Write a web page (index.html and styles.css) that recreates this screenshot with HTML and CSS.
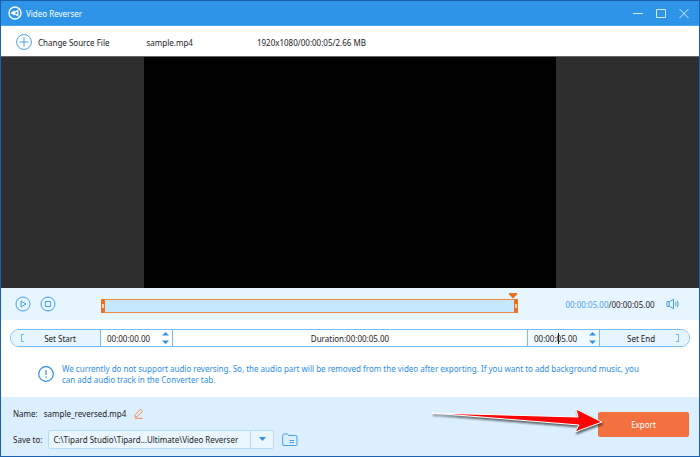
FILE: index.html
```
<!DOCTYPE html>
<html lang="en">
<head>
<meta charset="utf-8">
<title>Video Reverser</title>
<link rel="stylesheet" href="styles.css">
</head>
<body>
<main class="window">
  <header class="titlebar">
    <svg class="logo" viewBox="0 0 14 14" aria-hidden="true"><circle cx="7" cy="7" r="6" fill="none" stroke="#fff" stroke-width="1.400"/><path d="M2.500 7 6.500 4.200V9.800Z" fill="#fff"/><path d="M5.500 7 9.800 4.500V9.500Z" fill="none" stroke="#fff" stroke-width="1.300"/></svg>
    <h1 class="title">Video Reverser</h1>
    <div class="controls">
      <button class="icon-btn" aria-label="Minimize"><svg width="12" height="12" viewBox="0 0 12 12"><path d="M1 6.500H11"/></svg></button>
      <button class="icon-btn" aria-label="Maximize"><svg width="12" height="12" viewBox="0 0 12 12"><path d="M1.500 2.500H10.500V10.500H1.500Z"/></svg></button>
      <button class="icon-btn" aria-label="Close"><svg width="12" height="12" viewBox="0 0 12 12"><path d="M1.500 2 10.500 11M10.500 2 1.500 11"/></svg></button>
    </div>
  </header>

  <section class="source">
    <button class="change">
      <svg width="16" height="16" viewBox="0 0 16 16"><circle cx="8" cy="8" r="7.400"/><path d="M8 3.500V12.500M3.500 8H12.500"/></svg>
      <span>Change Source File</span>
    </button>
    <span class="file">sample.mp4</span>
    <span>1920x1080/00:00:05/2.66 MB</span>
  </section>

  <section class="stage"><div class="video"></div></section>

  <section class="playback">
    <button class="icon-btn" aria-label="Play"><svg width="16" height="16" viewBox="0 0 16 16"><circle cx="8" cy="8" r="7"/><path d="M6 5 11 8 6 11Z"/></svg></button>
    <button class="icon-btn" aria-label="Stop"><svg width="16" height="16" viewBox="0 0 16 16"><circle cx="8" cy="8" r="7"/><path d="M5.500 5.500H10.500V10.500H5.500Z"/></svg></button>
    <div class="timeline">
      <span class="handle"></span>
      <span class="handle handle-end"></span>
      <svg class="playhead" width="8" height="6" viewBox="0 0 8 6"><path d="M0 0H8V1.500L4 5.500 0 1.500Z"/></svg>
    </div>
    <span class="time"><span class="now">00:00:05.00</span>/00:00:05.00</span>
    <button class="icon-btn" aria-label="Volume"><svg width="14" height="12" viewBox="0 0 14 12"><path d="M1 3.500H3.200V8.500H1ZM3.500 4 7.500 1.200V10.800L3.500 8M9.500 4Q10.500 6 9.500 8M11.200 2.500Q13.200 6 11.200 9.500"/></svg></button>
  </section>

  <section class="range">
    <button class="set set-start"><span class="bracket bracket-open"></span>Set Start</button>
    <div class="stamp">
      <input type="text" value="00:00:00.00" aria-label="Start time">
      <svg class="spin" width="7" height="12" viewBox="0 0 7 12"><path d="M0 3.500 3.500 0 7 3.500ZM0 8.500 3.500 12 7 8.500Z"/></svg>
    </div>
    <div class="duration">Duration:00:00:05.00</div>
    <div class="stamp stamp-end">
      <input type="text" value="00:00:05.00" aria-label="End time">
      <i class="caret"></i>
      <svg class="spin" width="7" height="12" viewBox="0 0 7 12"><path d="M0 3.500 3.500 0 7 3.500ZM0 8.500 3.500 12 7 8.500Z"/></svg>
    </div>
    <button class="set set-end">Set End<span class="bracket bracket-close"></span></button>
  </section>

  <section class="notice">
    <svg width="16" height="16" viewBox="0 0 16 16"><circle cx="8" cy="8" r="7.300"/><path d="M8 4V9M8 10.500V12"/></svg>
    <p>We currently do not support audio reversing. So, the audio part will be removed from the video after exporting. If you want to add background music, you can add audio track in the Converter tab.</p>
  </section>

  <footer class="output">
    <div class="fields">
      <div class="row">
        <span>Name:</span>
        <span>sample_reversed.mp4</span>
        <button class="icon-btn edit" aria-label="Edit name"><svg width="10" height="11" viewBox="0 0 10 11"><path d="M.8 9 1.300 6.500 6.600 1.200 8.600 3.200 3.300 8.500ZM1 10.300H9"/></svg></button>
      </div>
      <div class="row">
        <label for="folder">Save to:</label>
        <div class="picker">
          <select id="folder"><option>C:\Tipard Studio\Tipard...Ultimate\Video Reverser</option></select>
          <svg class="drop" width="7" height="4" viewBox="0 0 7 4"><path d="M0 0H7L3.500 4Z"/></svg>
        </div>
        <button class="icon-btn" aria-label="Open folder"><svg width="16" height="14" viewBox="0 0 16 14"><path d="M.7 11.500V2.500Q.7 1 2.200 1H5.500L6.500 2.500H13.500Q15 2.500 15 4V11.500Q15 12.500 13.800 12.500H2Q.7 12.500.7 11.500ZM7.500 7.500H12M7.500 9.500H12"/></svg></button>
      </div>
    </div>
    <div class="action">
      <button class="export">Export</button>
      <svg class="arrow" width="176" height="34" viewBox="0 0 176 34" aria-hidden="true"><path d="M4 8 150 12 148 4 174 17 147 27 151 20Z"/></svg>
    </div>
  </footer>
</main>
</body>
</html>
```
FILE: styles.css
```
* { box-sizing: border-box; }

body {
  margin: 0;
  font: 8px/11px "Noto Sans", sans-serif;
  color: #222;
}

button, input, select {
  margin: 0;
  padding: 0;
  border: 0;
  background: none;
  font: inherit;
  color: inherit;
}

svg { display: block; fill: none; stroke: #45a0ec; }

.window {
  display: flex;
  flex-direction: column;
  min-height: 100vh;
  border: 1px solid #1c5fac;
  background: #fff;
}

.icon-btn { display: block; }

.titlebar {
  display: flex;
  align-items: center;
  gap: 4px;
  height: 25px;
  padding: 0 9px 0 7px;
  border-bottom: 1px solid #4da6f0;
  background: #2d94e8;
  color: #fff;
}
.logo { width: 14px; height: 14px; stroke: none; }
.title { margin: 0; font-size: inherit; font-weight: 400; }
.controls { display: flex; gap: 11px; margin-left: auto; }
.controls svg { stroke: #d5eafb; }

.source {
  display: flex;
  align-items: center;
  height: 30px;
  padding: 2px 15px 0;
}
.change { display: flex; align-items: center; gap: 6px; }
.file { margin: 0 64px 0 37px; }

.stage {
  display: flex;
  flex: 1;
  justify-content: center;
  min-height: 120px;
  border-top: 1px solid #666;
  background: #2e2e2e;
}
.video { width: 59%; background: #000; }

.playback {
  display: flex;
  align-items: center;
  height: 32px;
  padding: 0 19px 0 14px;
  background: #e7f5fe;
  gap: 9px;
}
.timeline {
  position: relative;
  flex: 1;
  height: 14px;
  margin: 4px 36px 0;
  border: 1px solid #ee8a45;
  background: #c6e8fd;
}
.handle {
  position: absolute;
  top: -1px;
  left: -1px;
  width: 4px;
  height: 14px;
  border-radius: 2px;
  background: #ee6f1d;
}
.handle::after {
  content: "";
  position: absolute;
  inset: 5px 1px;
  background: #fbd3b6;
}
.handle-end { right: -1px; left: auto; }
.playhead { position: absolute; top: -7px; right: 0; fill: #ee6f1d; stroke: none; }
.time { min-width: 94px; text-align: center; }
.now { color: #4aa3ec; }

.range {
  display: grid;
  grid-template-columns: 89px 72px 1fr 72px 90px;
  height: 18px;
  margin: 9px 9px 0;
  border: 1px solid #75bdf4;
  border-radius: 9px;
  overflow: hidden;
}
.range > * + * { border-left: 1px solid #75bdf4; }
.set {
  display: flex;
  align-items: center;
  justify-content: space-between;
  background: #e7f5fe;
}
.set-start { padding: 0 24px 0 10px; }
.set-end { padding: 0 10px 0 27px; }
.bracket { width: 3px; height: 8px; border: 1px solid #6db8f2; }
.bracket-open { border-right: 0; }
.bracket-close { border-left: 0; }
.stamp {
  position: relative;
  display: flex;
  align-items: center;
  justify-content: space-between;
  padding: 0 3px 0 6px;
}
.stamp input { width: 52px; height: 14px; }
.stamp-end { background: #f0f9ff; }
.spin, .drop { flex: none; fill: #2d94e8; stroke: none; }
.caret { position: absolute; top: 3px; left: 30px; width: 1px; height: 11px; background: #222; }
.duration { display: flex; align-items: center; justify-content: center; }

.notice {
  display: flex;
  align-items: center;
  gap: 8px;
  height: 50px;
  padding: 4px 56px 0 37px;
  color: #2d8fe6;
}
.notice svg { flex: none; stroke: #2d8fe6; stroke-width: 1.2px; }
.notice p { margin: 0; }

.output {
  display: flex;
  align-items: flex-start;
  justify-content: space-between;
  padding: 7px 10px 7px 12px;
  background: #dceffe;
}
.fields { display: flex; flex-direction: column; gap: 8px; }
.row { display: flex; align-items: center; gap: 6px; min-height: 18px; }
.row .icon-btn { margin-left: 2px; }
.edit svg { stroke: #f28a4e; }
.picker { position: relative; }
.picker select {
  width: 226px;
  height: 19px;
  padding: 0 24px 0 4px;
  border: 1px solid #b5dcf8;
  border-radius: 2px;
  background: #e9f6fe;
  appearance: none;
}
.drop {
  position: absolute;
  top: 7px;
  right: 8px;
}
.picker::after {
  content: "";
  position: absolute;
  top: 1px;
  right: 23px;
  width: 1px;
  height: 17px;
  background: #b5dcf8;
}
.action { position: relative; padding-top: 8px; }
.export {
  display: block;
  width: 91px;
  height: 25px;
  border-radius: 2px;
  background: #f37141;
  color: #fff;
}
.arrow {
  position: absolute;
  top: 1px;
  right: 85px;
  fill: #fb0606;
  stroke: #fff;
  filter: drop-shadow(1px 2px 1px rgb(0 0 0 / 60%));
}
```
